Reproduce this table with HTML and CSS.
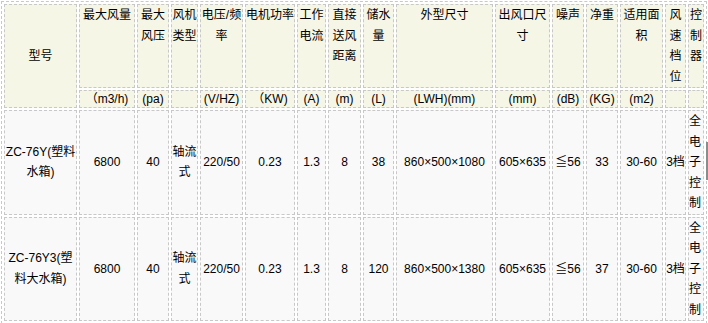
FILE: index.html
```html
<!DOCTYPE html>
<html lang="zh">
<head>
<meta charset="utf-8">
<link rel="stylesheet" href="styles.css">
</head>
<body>
<table class="spec">
  <colgroup>
    <col class="c1"><col class="c2"><col class="c3"><col class="c4"><col class="c5"><col class="c6"><col class="c7"><col class="c8">
    <col class="c9"><col class="c10"><col class="c11"><col class="c12"><col class="c13"><col class="c14"><col class="c15"><col class="c16">
  </colgroup>
  <thead>
    <tr class="head">
      <th rowspan="2" class="model">型号</th>
      <th>最大风量</th>
      <th>最大风压</th>
      <th>风机类型</th>
      <th>电压/频率</th>
      <th>电机功率</th>
      <th>工作电流</th>
      <th>直接送风距离</th>
      <th>储水量</th>
      <th>外型尺寸</th>
      <th>出风口尺寸</th>
      <th>噪声</th>
      <th>净重</th>
      <th>适用面积</th>
      <th>风速档位</th>
      <th>控制器</th>
    </tr>
    <tr class="unit">
      <th>（m3/h)</th>
      <th>(pa)</th>
      <th></th>
      <th>(V/HZ)</th>
      <th>（KW)</th>
      <th>(A)</th>
      <th>(m)</th>
      <th>(L)</th>
      <th>(LWH)(mm)</th>
      <th>(mm)</th>
      <th>(dB)</th>
      <th>(KG)</th>
      <th>(m2)</th>
      <th></th>
      <th></th>
    </tr>
  </thead>
  <tbody>
    <tr>
      <td>ZC-76Y(塑料水箱)</td>
      <td>6800</td>
      <td>40</td>
      <td>轴流式</td>
      <td>220/50</td>
      <td>0.23</td>
      <td>1.3</td>
      <td>8</td>
      <td>38</td>
      <td>860×500×1080</td>
      <td>605×635</td>
      <td>≦56</td>
      <td>33</td>
      <td>30-60</td>
      <td>3档</td>
      <td class="ctrl">全电子控制</td>
    </tr>
    <tr>
      <td>ZC-76Y3(塑料大水箱)</td>
      <td>6800</td>
      <td>40</td>
      <td>轴流式</td>
      <td>220/50</td>
      <td>0.23</td>
      <td>1.3</td>
      <td>8</td>
      <td>120</td>
      <td>860×500×1380</td>
      <td>605×635</td>
      <td>≦56</td>
      <td>37</td>
      <td>30-60</td>
      <td>3档</td>
      <td class="ctrl">全电子控制</td>
    </tr>
  </tbody>
</table>
<div class="scroll-mark"></div>
</body>
</html>
```

FILE: styles.css
```css
html, body {
  margin: 0;
  padding: 0;
  background: #ffffff;
}

body {
  font-family: "Liberation Sans", "Noto Sans CJK SC", sans-serif;
  font-size: 12px;
  color: #000;
  position: relative;
  height: 323px;
  overflow: hidden;
}

.spec {
  margin: 1px 0 0 1px;
  table-layout: fixed;
  width: 706px;
  border-collapse: separate;
  border-spacing: 2px;
  border: 1px dashed #c8c8c8;
}

.spec th,
.spec td {
  border: 1px dashed #c8c8c8;
  padding: 0;
  text-align: center;
  font-weight: normal;
  line-height: 20.5px;
  word-break: break-all;
}

.spec thead th {
  background: #f6f6e6;
}

.spec .head th {
  vertical-align: top;
}

.spec .head th.model {
  vertical-align: middle;
}

.spec .unit th {
  line-height: 16px;
  vertical-align: middle;
}

.spec tbody td {
  background: #f9f9f9;
  vertical-align: middle;
}

.spec tbody td.ctrl {
  text-align: left;
}

.c1 { width: 73px; }
.c2 { width: 56px; }
.c3 { width: 32px; }
.c4 { width: 27px; }
.c5 { width: 43px; }
.c6 { width: 50px; }
.c7 { width: 29px; }
.c8 { width: 33px; }
.c9 { width: 31px; }
.c10 { width: 97px; }
.c11 { width: 55px; }
.c12 { width: 32px; }
.c13 { width: 32px; }
.c14 { width: 43px; }
.c15 { width: 21px; }
.c16 { width: 16px; }

.scroll-mark {
  position: absolute;
  right: 0;
  top: 142px;
  width: 2px;
  height: 38px;
  background: #8c8c8c;
}
```
